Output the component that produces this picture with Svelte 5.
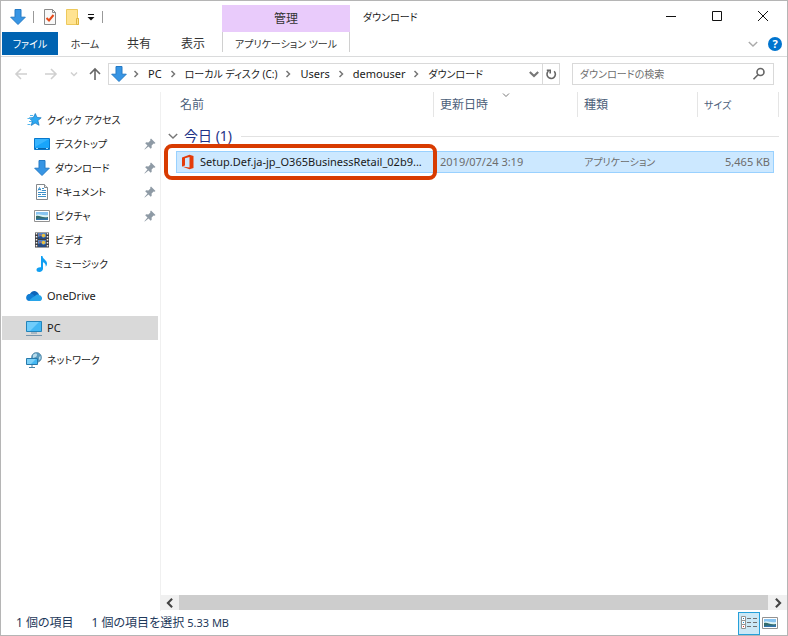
<script lang="ts">
  type Place = { label: string; icon: string; child?: boolean; pinned?: boolean; gap?: boolean }

  let selectedPlace = $state("PC")
  let query = $state("")
  let view = $state("details")
  let groupOpen = $state(true)

  const tabs = ["ホーム", "共有", "表示"]
  const crumbs = ["PC", "ローカル ディスク (C:)", "Users", "demouser", "ダウンロード"]

  const places: Place[] = [
    { label: "クイック アクセス", icon: "star" },
    { label: "デスクトップ", icon: "desktop", child: true, pinned: true },
    { label: "ダウンロード", icon: "download", child: true, pinned: true },
    { label: "ドキュメント", icon: "document", child: true, pinned: true },
    { label: "ピクチャ", icon: "picture", child: true, pinned: true },
    { label: "ビデオ", icon: "video", child: true },
    { label: "ミュージック", icon: "music", child: true },
    { label: "OneDrive", icon: "cloud", gap: true },
    { label: "PC", icon: "pc", gap: true },
    { label: "ネットワーク", icon: "network", gap: true },
  ]

  const file = {
    name: "Setup.Def.ja-jp_O365BusinessRetail_02b9...",
    date: "2019/07/24 3:19",
    type: "アプリケーション",
    size: "5,465 KB",
  }

  // katakana labels are set smaller than latin ones
  const script = (text: string) => (/[\u30a0-\u30ff]/.test(text) ? "kana" : "latin")
</script>

{#snippet chevron(dir: string)}
  <svg class="chev {dir}" viewBox="0 0 10 10" width="10" height="10"><path d="M3.5 2 6.5 5 3.5 8" /></svg>
{/snippet}

{#snippet icon(name: string)}
  <svg class="icon" viewBox="0 0 16 16" width="16" height="16" aria-hidden="true">
    {#if name === "download"}
      <path d="M5 .5h6v7.7h4.3L8 15.5.7 8.2H5z" fill="#3795e4" stroke="#247ac5" />
    {:else if name === "star"}
      <path d="M9.3 1.500l1.700 3.900 4.200.4-3.300 2.800 1.200 4.700-4-2.300-3.800 2.500 1-4.500L3 6l4.300-.4z" fill="#2ea9f2" stroke="#1675bf" stroke-width=".7" />
      <path d="M4 3.500h3M1.500 6.500h4M3 9.500h3M1.500 12.500h3" stroke="#54b7ed" fill="none" />
    {:else if name === "desktop"}
      <path d="M.5 2.500h15v11H.5z" fill="#18a5fb" stroke="#0878cc" />
      <path d="M1 3h14L1 11z" fill="#38b5ff" />
      <path d="M1 12.500h14" stroke="#0865ad" />
      <path d="M2 12.500h2M12 12.500h2" stroke="#9ad9ff" />
    {:else if name === "document"}
      <path d="M2.500.5h8l3 3v12h-11z" fill="#fff" stroke="#85898d" />
      <path d="M10.500.5v3h3" fill="#e5e7e8" stroke="#85898d" />
      <path d="M4 6.500l1.500-3 1.500 3M4.500 5.500h2M8 4.500h2M8 6.500h4M4 8.500h8M4 10.500h3M8 10.500h4M4 12.500h8" fill="none" stroke="#3b90ca" />
    {:else if name === "picture"}
      <path d="M.5 2.500h15v11H.5z" fill="#fff" stroke="#929292" />
      <path d="M2 4h12v5H2z" fill="#88c4f1" />
      <path d="M2 7c3-2 5 1 12 0v2H2z" fill="#dcf3f6" />
      <path d="M2 8c4-1 5 2 12 1v3H2z" fill="#346c6c" />
      <path d="M2 11c5-1 7 0 12-1v2H2z" fill="#3274ab" />
    {:else if name === "video"}
      <path d="M1 .500h14v15H1z" fill="#3f3f43" />
      <path d="M2.500 1v15M13.500 1v15" stroke="#f0f0f0" stroke-width="1.500" stroke-dasharray="1.500 1.500" />
      <path d="M4 1h8v6H4zM4 8h8v7H4z" fill="#5485c4" />
      <path d="M4 5l3-1 2 2 3-1v2H4zM4 12l3-1 2 2 3-1v3H4z" fill="#264b82" />
      <circle cx="9.500" cy="3.500" r="1.800" fill="#eac041" /><circle cx="9.500" cy="10.500" r="1.800" fill="#eac041" />
      <path d="M5 3h2M5 10h2" stroke="#c8514b" />
    {:else if name === "music"}
      <path d="M7 0h1.500c0 3 4.500 4 4.500 7.500 0 1.500-.6 2.500-1.200 3.200.2-2.800-1.300-4-2.800-4.500v6.500C9 14.500 7.400 16 5.200 16 3.500 16 2.500 15 2.500 13.700 2.500 12 4.200 11 7 11.200z" fill="#109ff2" />
    {:else if name === "cloud"}
      <path d="M4 6c2-4 7-4 9 .8L9 11 1 9c0-2 1-3 3-3z" fill="#0d65ba" />
      <path d="M3.500 6c2-.5 3 0 4 .7L13 13H3.500C-1 13-1 6.500 3.500 6z" fill="#127dd4" />
      <path d="M9 8c2-2 4-1.500 4.500-.8C17 8 17 13 13 13H3c1-2 3-3 6-5z" fill="#28a4e9" />
    {:else if name === "pc"}
      <path d="M.5 1.500h15v10H.5z" fill="#42b7f4" stroke="#2383b9" />
      <path d="M1 2h12L4 11H1z" fill="#70cdfb" />
      <path d="M5 13h6M0 15.500h16" stroke="#7794aa" />
    {:else if name === "network"}
      <circle cx="10.500" cy="5.500" r="5" fill="#5b9bbe" stroke="#477b9b" stroke-width=".6" />
      <path d="M7 3c2-2 4-2 4 0s-2 2-4 3zM13 5l1.500-1v3l-1.500 1z" fill="#b9dceb" />
      <path d="M.5 6.500h11v6H.5z" fill="#43b7f2" stroke="#2679ab" />
      <path d="M1 7h9l-5 5H1z" fill="#7bd0f8" />
      <path d="M6 13v2M3 15.500h6" stroke="#4681a5" />
    {/if}
  </svg>
{/snippet}

<div class="window">
  <header>
    <div class="start">
      <div class="quick">
        {@render icon("download")}
        <span class="bar"></span>
        <button aria-label="プロパティ">
          <svg viewBox="0 0 16 16" width="16" height="16"><path d="M2.500.5h8l3 3v12h-11z" fill="#f8f8f8" stroke="#8b8b8b" /><path d="M10.500.5v3h3" fill="none" stroke="#8b8b8b" /><path d="M4.500 9l2.500 2.500L11.500 6" fill="none" stroke="#e64a19" stroke-width="2" /></svg>
        </button>
        <button aria-label="新しいフォルダー">
          <svg viewBox="0 0 16 16" width="16" height="16"><path d="M2.500.5h11v9h1v6h-12z" fill="#ffe391" stroke="#edc95c" /><path d="M12.500 9.500h2v6h-2z" fill="#ffe391" stroke="#dfb641" /></svg>
        </button>
        <button class="customize" aria-label="クイック アクセス ツール バーのカスタマイズ">
          <svg viewBox="0 0 8 8" width="8" height="8"><path d="M1 1.500h6" stroke="#111" /><path d="M.5 4h7L4 7.500z" fill="#111" /></svg>
        </button>
        <span class="bar"></span>
      </div>
      <nav class="tabs">
        <button class="file kana">ファイル</button>
        {#each tabs as tab}
          <button class:kana={script(tab) === "kana"}>{tab}</button>
        {/each}
      </nav>
    </div>
    <div class="context">
      <div class="manage">管理</div>
      <button class="tools kana">アプリケーション ツール</button>
    </div>
    <div class="end">
      <div class="titlebar">
        <span class="title kana">ダウンロード</span>
        <button aria-label="最小化"><svg viewBox="0 0 12 12" width="12" height="12"><path d="M1 6.500h10" /></svg></button>
        <button aria-label="最大化"><svg viewBox="0 0 12 12" width="12" height="12"><path d="M1.500 1.500h9v9h-9z" /></svg></button>
        <button aria-label="閉じる"><svg viewBox="0 0 12 12" width="12" height="12"><path d="M1 1l10 10M11 1L1 11" /></svg></button>
      </div>
      <div class="ribbon-end">
        <button aria-label="リボンの展開">{@render chevron("down wide pale")}</button>
        <button class="help" aria-label="ヘルプ">?</button>
      </div>
    </div>
  </header>

  <div class="navigation">
    <button class="arrow" disabled aria-label="戻る"><svg viewBox="0 0 14 14" width="14" height="14"><path d="M13 7H2M7 2L2 7l5 5" /></svg></button>
    <button class="arrow" disabled aria-label="進む"><svg viewBox="0 0 14 14" width="14" height="14"><path d="M1 7h11M7 2l5 5-5 5" /></svg></button>
    <button class="recent" disabled aria-label="最近表示した場所">{@render chevron("down faint")}</button>
    <button class="up" aria-label="上へ"><svg viewBox="0 0 14 14" width="14" height="14"><path d="M7 13V2M2 7l5-5 5 5" /></svg></button>
    <div class="address">
      {@render icon("download")}
      {#each crumbs as crumb}
        {@render chevron("step")}
        <button class={script(crumb)}>{crumb}</button>
      {/each}
      <button class="history" aria-label="以前の場所">{@render chevron("down wide")}</button>
      <button class="refresh" aria-label="更新">
        <svg viewBox="0 0 12 12" width="12" height="12"><path d="M9.200 3.300A4.200 4.200 0 1 1 3.500 3M1.800 2.200h3.400v3.300" /></svg>
      </button>
    </div>
    <label class="search">
      <input type="text" placeholder="ダウンロードの検索" aria-label="ダウンロードの検索" bind:value={query} />
      <svg viewBox="0 0 14 14" width="14" height="14"><circle cx="8.500" cy="5" r="3.500" /><path d="M6 7.800L1.500 12.300" /></svg>
    </label>
  </div>

  <div class="body">
    <aside>
      {#each places as place}
        <button
          class="place"
          class:child={place.child}
          class:gap={place.gap}
          class:selected={selectedPlace === place.label}
          onclick={() => (selectedPlace = place.label)}
        >
          {@render icon(place.icon)}
          <span class={script(place.label)}>{place.label}</span>
          {#if place.pinned}
            <svg class="pin" viewBox="0 0 12 12" width="12" height="12"><path d="M7 .5L11.500 5l-1 .8-.9-.2-2 2 .1 2.200-1 1L4.500 8.500.8 11.600.4 11.200 3.500 7.500 1.200 5.300l1-1 2.200.1 2-2-.2-.9z" /></svg>
          {/if}
        </button>
      {/each}
    </aside>

    <main>
      <div class="listing">
        <table>
          <colgroup>
            <col class="c-edge" /><col /><col class="c-date" /><col class="c-type" /><col class="c-size" /><col class="c-end" />
          </colgroup>
          <thead>
            <tr>
              <td></td>
              <th class="name">名前</th>
              <th class="date">更新日時{@render chevron("down sort")}</th>
              <th>種類</th>
              <th class="kana">サイズ</th>
              <td class="last"></td>
            </tr>
          </thead>
          <tbody>
            <tr>
              <th colspan="6" class="group">
                <button onclick={() => (groupOpen = !groupOpen)}>
                  {@render chevron("down large")}
                  <span>今日 (1)</span>
                  <i></i>
                </button>
              </th>
            </tr>
            {#if groupOpen}
              <tr class="file-row">
                <td></td>
                <td class="cell first">
                  <div class="filename">
                    <svg viewBox="0 0 16 16" width="16" height="16"><path d="M2 3.500L9.500.8l4 1.200v12l-4 1.200L2 12.500l7.500 1V3L5 4.200v7.200L2 12.500z" fill="#e43c0b" /></svg>
                    <span>{file.name}</span>
                  </div>
                  <div class="highlight"></div>
                </td>
                <td class="cell">{file.date}</td>
                <td class="cell kana">{file.type}</td>
                <td class="cell size">{file.size}</td>
                <td></td>
              </tr>
            {/if}
          </tbody>
        </table>
      </div>
      <div class="scrollbar">
        <button aria-label="左へスクロール">{@render chevron("back bold")}</button>
        <div class="thumb"></div>
        <button aria-label="右へスクロール">{@render chevron("bold")}</button>
      </div>
    </main>
  </div>

  <footer>
    <span class="count">1 個の項目</span>
    <span class="chosen">1 個の項目を選択</span>
    <span class="bytes">5.33 MB</span>
    <button class="view" class:active={view === "details"} aria-label="詳細" onclick={() => (view = "details")}>
      <svg viewBox="0 0 18 16" width="18" height="16">
        <path d="M1.500 1.500h4v4h-4zM1.500 5.500h4v4h-4zM1.500 9.500h4v4h-4z" fill="#fff" stroke="#929292" />
        <path d="M3 3.500h1" stroke="#2b78a8" /><path d="M3 7.500h1" stroke="#2596dc" /><path d="M3 11.500h1" stroke="#d33" />
        <path d="M7 3.500h4M13 3.500h4M7 7.500h4M13 7.500h4M7 11.500h4M13 11.500h4" stroke="#717171" />
      </svg>
    </button>
    <button class="view" class:active={view === "large"} aria-label="大アイコン" onclick={() => (view = "large")}>
      {@render icon("picture")}
    </button>
  </footer>
</div>

<style>
  :global(body) {
    margin: 0;
  }

  .window {
    display: flex;
    flex-direction: column;
    box-sizing: border-box;
    min-height: 100vh;
    border: 1px solid #b5b5b5;
    background: #fff;
    color: #1a1a1a;
    font-family: "Noto Sans", "Noto Sans CJK JP", sans-serif;
    font-size: 12px;
    line-height: 16px;
    font-feature-settings: "palt";
  }

  button {
    display: flex;
    align-items: center;
    justify-content: center;
    padding: 0;
    border: 0;
    background: none;
    color: inherit;
    font: inherit;
    font-feature-settings: inherit;
    white-space: nowrap;
  }

  svg {
    display: block;
    flex: none;
  }

  .latin {
    font-size: 11px;
  }

  .kana {
    font-size: 10px;
  }

  .chev {
    fill: none;
    stroke: #777;
    stroke-width: 1.5;
  }

  .down {
    transform: rotate(90deg);
  }

  .back {
    transform: rotate(180deg);
  }

  .wide,
  .bold {
    width: 14px;
    height: 14px;
  }

  .bold {
    stroke: #444;
  }

  .pale {
    stroke: #aaa;
    stroke-width: 1;
  }

  .faint {
    stroke: #d0d0d0;
  }

  /* title bar and ribbon */
  header {
    display: flex;
    border-bottom: 1px solid #dadbdc;
  }

  .start {
    flex: 0 0 221px;
  }

  .quick {
    display: flex;
    align-items: center;
    height: 31px;
    padding-left: 9px;
  }

  .quick .bar {
    width: 1px;
    height: 12px;
    margin: 0 8px 0 7px;
    background: #999;
  }

  .quick button {
    margin-right: 6px;
  }

  .quick .customize {
    margin: 0 0 0 1px;
  }

  .tabs {
    display: flex;
    height: 24px;
    padding-left: 1px;
  }

  .tabs button {
    flex: 0 0 54px;
    color: #333;
  }

  .tabs .file {
    flex-basis: 56px;
    height: 23px;
    background: #0063b1;
    color: #fff;
  }

  .context {
    flex: 0 0 128px;
    padding-top: 4px;
  }

  .manage {
    height: 27px;
    background: #e9cbfb;
    color: #333;
    line-height: 27px;
    text-align: center;
  }

  .tools {
    box-sizing: border-box;
    width: 100%;
    height: 20px;
    padding-top: 4px;
    border: solid #d0d0d0;
    border-width: 0 1px;
    color: #333;
  }

  .end {
    flex: 1;
  }

  .titlebar {
    display: flex;
    height: 30px;
    padding: 0 1px 1px 0;
  }

  .title {
    flex: 1;
    padding: 8px 0 0 13px;
  }

  .titlebar button {
    width: 46px;
  }

  .titlebar svg {
    fill: none;
    stroke: #111;
  }

  .ribbon-end {
    display: flex;
    align-items: center;
    justify-content: flex-end;
    gap: 8px;
    height: 24px;
    padding-right: 5px;
  }

  .help {
    width: 14px;
    height: 14px;
    border-radius: 50%;
    background: #0074ce;
    color: #fff;
    font-size: 11px;
    font-weight: bold;
  }

  /* address row */
  .navigation {
    display: flex;
    padding: 6px 13px 7px 5px;
  }

  .arrow {
    width: 30px;
  }

  .recent {
    width: 16px;
  }

  .up {
    width: 26px;
  }

  .arrow svg,
  .up svg,
  .refresh svg,
  .search svg {
    fill: none;
    stroke: #666;
    stroke-width: 1.6;
  }

  .arrow svg {
    stroke: #d0d0d0;
  }

  .address {
    display: flex;
    flex: 1;
    align-items: center;
    box-sizing: border-box;
    height: 22px;
    padding-left: 2px;
    border: 1px solid #d9d9d9;
  }

  .step {
    width: 10px;
    margin: 0 7px 0 6px;
  }

  .address .icon + .step {
    margin-left: 4px;
  }

  .history {
    width: 16px;
    margin-left: auto;
  }

  .refresh {
    width: 17px;
    height: 20px;
    border-left: 1px solid #d9d9d9;
  }

  .search {
    display: flex;
    flex: 0 0 202px;
    align-items: center;
    box-sizing: border-box;
    min-width: 0;
    height: 22px;
    margin-left: 12px;
    padding: 0 7px;
    border: 1px solid #d9d9d9;
  }

  .search input {
    flex: 1;
    min-width: 0;
    padding: 0;
    border: 0;
    outline: 0;
    font: inherit;
    font-size: 10px;
    font-feature-settings: inherit;
  }

  .search input::placeholder {
    color: #6d6d6d;
  }

  .body {
    display: flex;
    flex: 1;
  }

  /* navigation pane */
  aside {
    box-sizing: border-box;
    flex: 0 0 160px;
    padding: 16px 2px 0 1px;
    border-right: 1px solid #f0f0f0;
  }

  .place {
    width: 100%;
    height: 24px;
    padding: 0 2px 0 24px;
    gap: 5px;
    justify-content: flex-start;
  }

  .child {
    padding-left: 32px;
  }

  .gap {
    margin-top: 8px;
  }

  .selected {
    background: #d9d9d9;
  }

  .pin {
    margin-left: auto;
    fill: #8e9aa5;
  }

  /* file list */
  main {
    display: flex;
    flex: 1;
    flex-direction: column;
    min-width: 0;
  }

  .listing {
    flex: 1;
    padding-right: 8px;
  }

  table {
    width: 100%;
    table-layout: fixed;
    border-collapse: separate;
    border-spacing: 0;
  }

  .c-edge {
    width: 15px;
  }

  .c-date {
    width: 144px;
  }

  .c-type {
    width: 120px;
  }

  .c-size {
    width: 77px;
  }

  .c-end {
    width: 5px;
  }

  th,
  td {
    padding: 0;
    font-weight: normal;
    text-align: left;
  }

  thead th {
    position: relative;
    height: 25px;
    padding-left: 6px;
    border-left: 1px solid #e5e5e5;
    color: #4c607a;
  }

  thead .name {
    padding-left: 4px;
    border-left: 0;
  }

  .last {
    border-right: 1px solid #e5e5e5;
  }

  .sort {
    position: absolute;
    top: -2px;
    left: 67px;
    stroke-width: 1;
  }

  .group button {
    width: 100%;
    height: 34px;
    padding: 4px 0 0 5px;
    box-sizing: border-box;
    justify-content: flex-start;
    color: #1e3287;
    font-size: 14px;
  }

  .group span {
    margin: 0 9px 0 4px;
  }

  .group i {
    flex: 1;
    height: 1px;
    background: #e2e2e2;
  }

  .large {
    width: 14px;
    height: 14px;
    stroke-width: 1;
  }

  .cell {
    position: relative;
    height: 20px;
    padding-left: 7px;
    border: solid #99d1ff;
    border-width: 1px 0;
    background: #cce8ff;
    color: #6d6d6d;
    font-size: 11px;
  }

  .cell.kana {
    font-size: 10px;
  }

  .first {
    padding-left: 3px;
    border-left-width: 1px;
    color: #1a1a1a;
  }

  .size {
    padding: 0 3px 0 0;
    border-right-width: 1px;
    text-align: right;
  }

  .filename {
    display: flex;
    align-items: center;
    gap: 4px;
    white-space: nowrap;
  }

  .highlight {
    position: absolute;
    inset: -8px -4px -8px -13px;
    z-index: 1;
    border: 4px solid #d83b01;
    border-radius: 8px;
    pointer-events: none;
  }

  .scrollbar {
    display: flex;
    height: 15px;
    margin-bottom: 1px;
    background: #f0f0f0;
  }

  .scrollbar button {
    width: 18px;
  }

  .thumb {
    flex: 1;
    margin-right: 1px;
    background: #cdcdcd;
  }

  /* status bar */
  footer {
    display: flex;
    align-items: center;
    height: 24px;
    padding: 0 7px 0 15px;
    color: #1e395b;
  }

  .count {
    margin-right: 18px;
  }

  .chosen {
    margin-right: 3px;
  }

  .bytes {
    margin-right: auto;
    font-size: 11px;
  }

  .view {
    box-sizing: border-box;
    height: 23px;
    padding: 0 1px;
    border: 1px solid transparent;
  }

  .active {
    border-color: #26a0da;
    background: #cbe8f6;
  }
</style>
